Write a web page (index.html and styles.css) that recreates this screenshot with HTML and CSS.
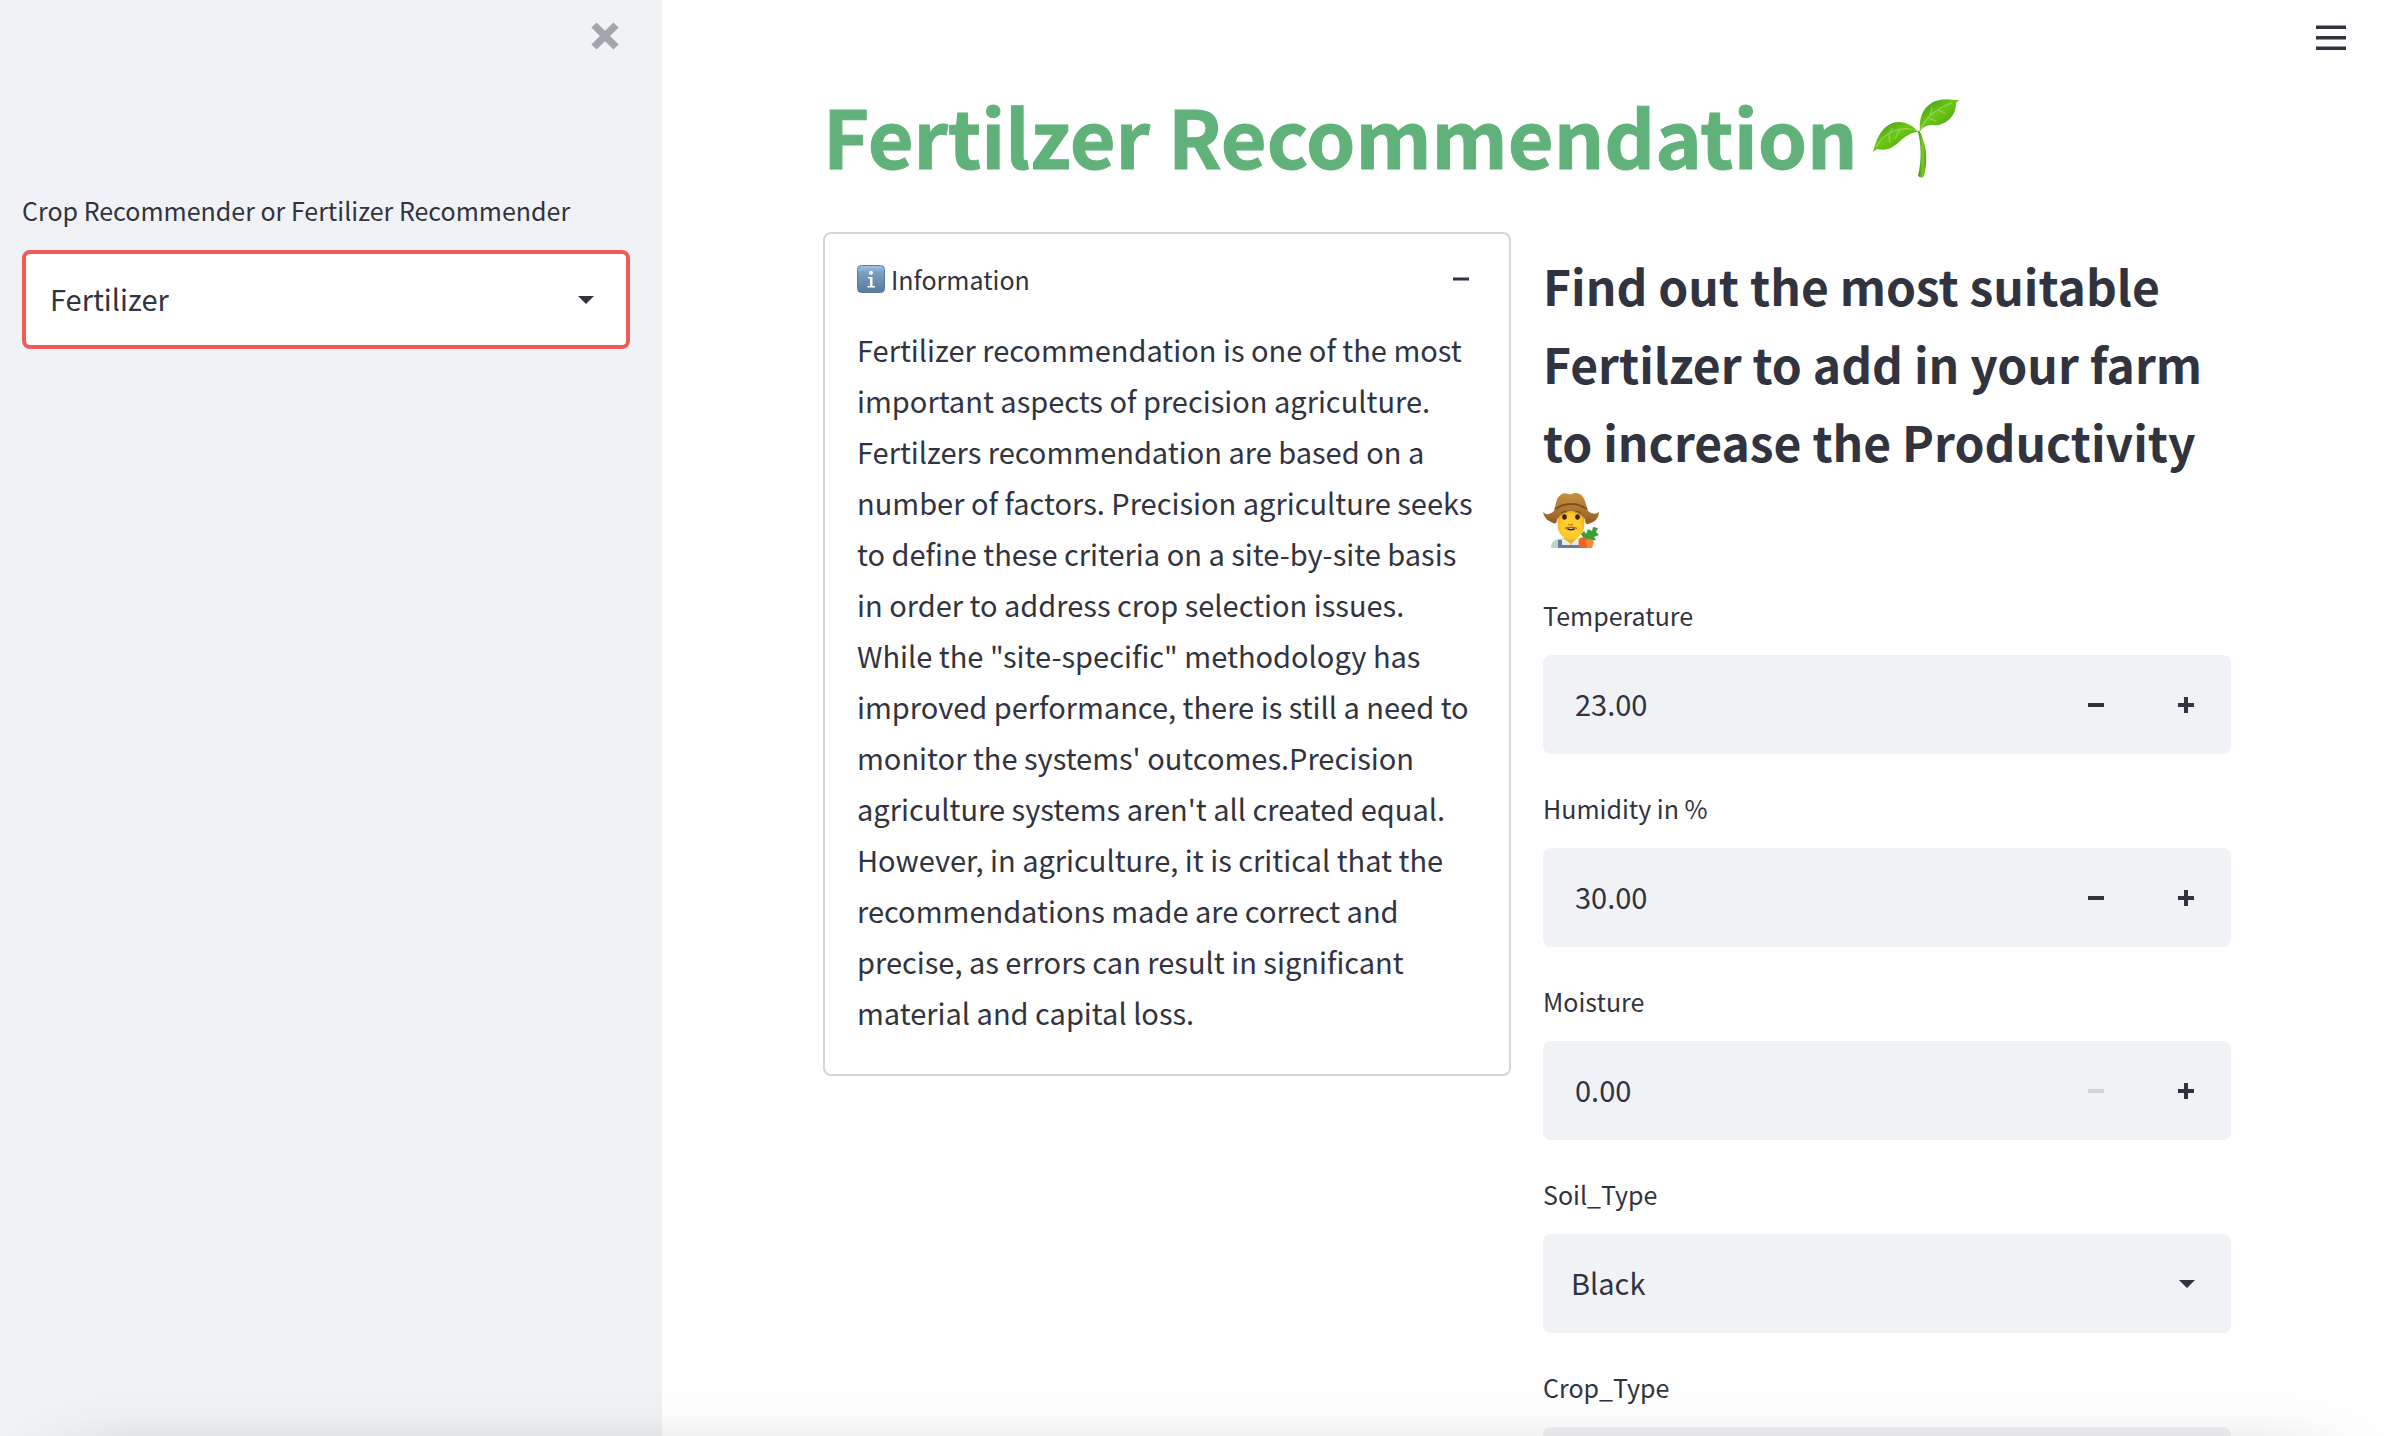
FILE: index.html
```html
<!DOCTYPE html>
<html lang="en">
<head>
<meta charset="utf-8">
<meta name="viewport" content="width=device-width, initial-scale=1">
<title>Fertilzer Recommendation</title>
<link rel="stylesheet" href="styles.css">
</head>
<body>
<div class="app">
  <aside class="sidebar">
    <div class="sidebar-top">
      <button class="close" type="button" aria-label="Close sidebar">
        <svg viewBox="0 0 28 28" width="28" height="28"><path d="M3 3 25 25M25 3 3 25" stroke="#a4a5aa" stroke-width="7.4" fill="none"/></svg>
      </button>
    </div>
    <div class="field">
      <label class="label" for="mode">Crop Recommender or Fertilizer Recommender</label>
      <div class="select-wrap">
        <select class="control select focused" id="mode"><option>Fertilizer</option><option>Crop</option></select>
        <svg class="caret" viewBox="0 0 16 8" width="16" height="8"><path d="M0 0h16L8 8z"/></svg>
      </div>
    </div>
  </aside>

  <main class="main">
    <button class="menu" type="button" aria-label="Main menu">
      <svg viewBox="0 0 30 26" width="30" height="26"><path d="M0 .5h30v3.500H0zM0 11h30v3.500H0zM0 21.500h30v3.500H0z" fill="#31333f"/></svg>
    </button>
    <div class="content">
      <h1 class="title"><span class="title-text">Fertilzer Recommendation</span>
        <svg class="sprout" viewBox="0 0 88 82" width="88" height="82" role="img" aria-label="Seedling">
          <defs>
            <linearGradient id="leafA" x1="0" y1="0" x2="1" y2="1"><stop offset="0" stop-color="#3d9410"/><stop offset=".45" stop-color="#6cc716"/><stop offset="1" stop-color="#3f970f"/></linearGradient>
            <linearGradient id="stem" x1="0" y1="0" x2="1" y2="0"><stop offset="0" stop-color="#3d960c"/><stop offset=".6" stop-color="#7fca28"/><stop offset="1" stop-color="#419d10"/></linearGradient>
          </defs>
          <path d="M47 32C53 43 57 59 52 78Q50 81 46 78C50 61 49 46 46 34Z" fill="url(#stem)"/>
          <path d="M46 34C35 20 12 18 3 47L1 54 5 51C25 56 28 35 46 34Z" fill="url(#leafA)"/>
          <path d="M48 33C46 12 59-2 82 2L87 2 84 5C84 23 67 29 60 27Q52 27 48 33Z" fill="url(#leafA)"/>
          <path d="M4 49C12 35 28 26 46 33M17 37l1 8M28 31l-5 10M17 37l3-7M49 31C53 20 65 10 80 5M56 20l8 3M66 12l7 3M58 18l2-8" fill="none" stroke="#9ed86a" stroke-width="1.200" opacity=".8"/>
        </svg>
      </h1>
      <div class="columns">
        <details class="card" open>
          <summary class="card-head">
            <svg width="28" height="28" viewBox="0 0 28 28" role="img" aria-label="Information symbol">
              <defs><linearGradient id="tile" x1="0" y1="0" x2="0" y2="1"><stop offset="0" stop-color="#a7c7e4"/><stop offset=".25" stop-color="#7ba0c4"/><stop offset="1" stop-color="#58799b"/></linearGradient></defs>
              <rect x=".5" y=".5" width="27" height="27" rx="4" fill="url(#tile)" stroke="#577b9e"/>
              <circle cx="14" cy="7.700" r="2" fill="#fff"/><path d="M11 12h4.500v9H18v1.500h-7.500V21H13v-7.500h-2z" fill="#fff"/>
            </svg>
            <span class="card-name">Information</span>
            <svg width="16" height="4" viewBox="0 0 16 4"><path d="M0 .5h16v3H0z" fill="#31333f"/></svg>
          </summary>
          <p class="card-text">Fertilizer recommendation is one of the most important aspects of precision agriculture. Fertilzers recommendation are based on a number of factors. Precision agriculture seeks to define these criteria on a site-by-site basis in order to address crop selection issues. While the "site-specific" methodology has improved performance, there is still a need to monitor the systems' outcomes.Precision agriculture systems aren't all created equal. However, in agriculture, it is critical that the recommendations made are correct and precise, as errors can result in significant material and capital loss.</p>
        </details>

        <form class="form">
          <h2 class="subtitle">Find out the most suitable Fertilzer to add in your farm to increase the Productivity
            <svg class="farmer" viewBox="0 0 56 56" width="56" height="56" role="img" aria-label="Farmer">
              <defs>
                <radialGradient id="face" cx=".5" cy=".6" r=".6"><stop offset="0" stop-color="#ffd83b"/><stop offset=".65" stop-color="#fdc727"/><stop offset="1" stop-color="#e49b17"/></radialGradient>
                <linearGradient id="hat" x1="0" y1="0" x2="0" y2="1"><stop offset="0" stop-color="#c5923f"/><stop offset=".6" stop-color="#a8742f"/><stop offset="1" stop-color="#8a5a24"/></linearGradient>
              </defs>
              <path d="M8 56V54Q9 47 20 46H36Q43 48 44 56Z" fill="#bcd6cf"/>
              <path d="M21 43h13v6l-6 5-7-5z" fill="#eba91b"/>
              <path d="M20 46l8 6-4 4-6-5zM34 46l-6 6 4 4 5-5z" fill="#e3efea"/>
              <path d="M15 48h4v5h18v-4h3v7H15z" fill="#6b789b"/>
              <path d="M14 20Q28 11 42 20L41 37Q37 47 28 48Q18 47 15 37Z" fill="url(#face)"/>
              <path d="M0 20Q5 25 11 19L14 7Q19-1 25 2Q28 3 31 1Q39 0 42 9L45 19Q51 24 56 20Q56 29 45 32Q42 33 42 27Q28 11 14 27Q14 34 8 30Q1 27 0 20Z" fill="url(#hat)"/>
              <path d="M12 17Q28 7 44 17" fill="none" stroke="#7d5122" stroke-width="2"/>
              <ellipse cx="21.500" cy="25" rx="2.300" ry="2.800" fill="#3a2411"/><ellipse cx="34.500" cy="25" rx="2.300" ry="2.800" fill="#3a2411"/>
              <path d="M18 21q3-2 6-1M32 20q4-1 6 1" stroke="#76501a" stroke-width="1.200" fill="none"/>
              <path d="M25 32q3 2 5 0" stroke="#cb8011" stroke-width="1.300" fill="none"/>
              <path d="M22 36.500Q28 34 34 36.500" stroke="#b06c17" stroke-width="1.500" fill="none"/>
              <path d="M24.500 37q3.500 1.500 7 0" stroke="#31160a" stroke-width="1.700" fill="none"/>
              <path d="M41 47L38 42l3-3 2 3 2-5 4 2 1-4 5 1-2 4 3 3-5 2 2 3-7 1z" fill="#3f9d3a"/>
              <path d="M37 46q5-2 7 2l1 8h-8q-3-5 0-10z" fill="#ee6526"/><path d="M43 48q5-3 8 2l-2 6h-5z" fill="#f58a37"/>
            </svg>
          </h2>
          <div class="field">
            <label class="label" for="temperature">Temperature</label>
            <div class="control number">
              <input class="number-input" id="temperature" type="number" step="0.01" value="23.00">
              <button class="step" type="button" aria-label="Decrease temperature"><svg width="16" height="16" viewBox="0 0 16 16"><path d="M0 6h16v4H0z"/></svg></button>
              <button class="step" type="button" aria-label="Increase temperature"><svg width="16" height="16" viewBox="0 0 16 16"><path d="M0 6h6V0h4v6h6v4h-6v6H6v-6H0z"/></svg></button>
            </div>
          </div>
          <div class="field">
            <label class="label" for="humidity">Humidity in %</label>
            <div class="control number">
              <input class="number-input" id="humidity" type="number" step="0.01" value="30.00">
              <button class="step" type="button" aria-label="Decrease humidity"><svg width="16" height="16" viewBox="0 0 16 16"><path d="M0 6h16v4H0z"/></svg></button>
              <button class="step" type="button" aria-label="Increase humidity"><svg width="16" height="16" viewBox="0 0 16 16"><path d="M0 6h6V0h4v6h6v4h-6v6H6v-6H0z"/></svg></button>
            </div>
          </div>
          <div class="field">
            <label class="label" for="moisture">Moisture</label>
            <div class="control number">
              <input class="number-input" id="moisture" type="number" step="0.01" min="0" value="0.00">
              <button class="step" type="button" aria-label="Decrease moisture" disabled><svg width="16" height="16" viewBox="0 0 16 16"><path d="M0 6h16v4H0z"/></svg></button>
              <button class="step" type="button" aria-label="Increase moisture"><svg width="16" height="16" viewBox="0 0 16 16"><path d="M0 6h6V0h4v6h6v4h-6v6H6v-6H0z"/></svg></button>
            </div>
          </div>
          <div class="field">
            <label class="label" for="soil">Soil_Type</label>
            <div class="select-wrap">
              <select class="control select" id="soil"><option>Black</option></select>
              <svg class="caret" viewBox="0 0 16 8" width="16" height="8"><path d="M0 0h16L8 8z"/></svg>
            </div>
          </div>
          <div class="field">
            <label class="label" for="crop">Crop_Type</label>
            <div class="select-wrap">
              <select class="control select" id="crop"><option></option></select>
            </div>
          </div>
        </form>
      </div>
    </div>
  </main>
</div>
<div class="edge-shade"></div>
</body>
</html>
```
FILE: styles.css
```css
* { box-sizing: border-box; }

body {
  margin: 0;
  background: #fff;
  color: #31333f;
  font-family: "Noto Sans CJK SC", "Noto Sans", sans-serif;
  font-size: 29px;
}

button {
  display: flex;
  align-items: center;
  justify-content: center;
  padding: 0;
  border: 0;
  background: none;
  color: inherit;
}

button svg, .caret { fill: currentColor; }

.app {
  display: flex;
  height: 100vh;
  overflow: hidden;
}

.sidebar {
  flex: 0 0 662px;
  padding: 22px 32px 0 22px;
  background: #f0f2f6;
}

.sidebar-top {
  display: flex;
  justify-content: flex-end;
  height: 166px;
  padding-right: 11px;
}

.close { height: 28px; }

.main {
  position: relative;
  flex: 1;
  min-width: 0;
  overflow: hidden;
}

.menu {
  position: absolute;
  top: 25px;
  right: 46px;
}

.content {
  max-width: 1408px;
  margin: 0 auto;
  padding-top: 82px;
}

.title {
  display: flex;
  align-items: center;
  gap: 14px;
  height: 114px;
  margin: 0 0 36px;
  color: #60b27a;
  font-size: 79px;
  font-weight: 700;
  line-height: 114px;
  -webkit-text-stroke: 1px #60b27a;
}

.title-text { padding-bottom: 8px; }

.columns {
  display: grid;
  grid-template-columns: 1fr 1fr;
  align-items: start;
  gap: 32px;
}

.card {
  border: 2px solid #d6d6d9;
  border-radius: 8px;
  padding: 0 32px 36px;
}

.card-head {
  display: flex;
  align-items: center;
  gap: 6px;
  height: 90px;
  font-size: 25px;
  list-style: none;
}

.card-name { flex: 1; }

.card-head svg:last-child { margin-right: 8px; }

.card-text {
  margin: 0;
  line-height: 51px;
}

.subtitle {
  margin: 0;
  padding: 14px 0 35px;
  font-size: 48px;
  font-weight: 700;
  line-height: 78px;
}

.farmer { vertical-align: -8px; }

.field { margin-bottom: 32px; }

.label {
  display: block;
  height: 62px;
  padding-top: 2px;
  font-size: 25px;
  line-height: 40px;
}

.control {
  display: flex;
  width: 100%;
  height: 99px;
  border: 0;
  border-radius: 8px;
  background: #f0f2f6;
  color: inherit;
  font: inherit;
}

.select-wrap { position: relative; }

.select {
  appearance: none;
  padding: 0 80px 4px 28px;
}

.focused {
  border: 4px solid #f05b56;
  padding-left: 24px;
  background: #fff;
}

.caret {
  position: absolute;
  top: 46px;
  right: 36px;
  pointer-events: none;
}

.number-input {
  flex: 1;
  min-width: 0;
  padding: 0 0 4px 32px;
  border: 0;
  background: none;
  color: inherit;
  font: inherit;
  appearance: textfield;
}

.number-input::-webkit-inner-spin-button { display: none; }

.step { width: 90px; }

.step:disabled { color: #d3d5db; }

.edge-shade {
  position: fixed;
  inset: auto 0 0;
  height: 46px;
  background: linear-gradient(to bottom, rgba(0, 0, 0, 0), rgba(0, 0, 0, .02) 60%, rgba(0, 0, 0, .05));
  mask-image: linear-gradient(to right, transparent, #000 130px, #000 calc(100% - 130px), transparent);
  pointer-events: none;
}
```
